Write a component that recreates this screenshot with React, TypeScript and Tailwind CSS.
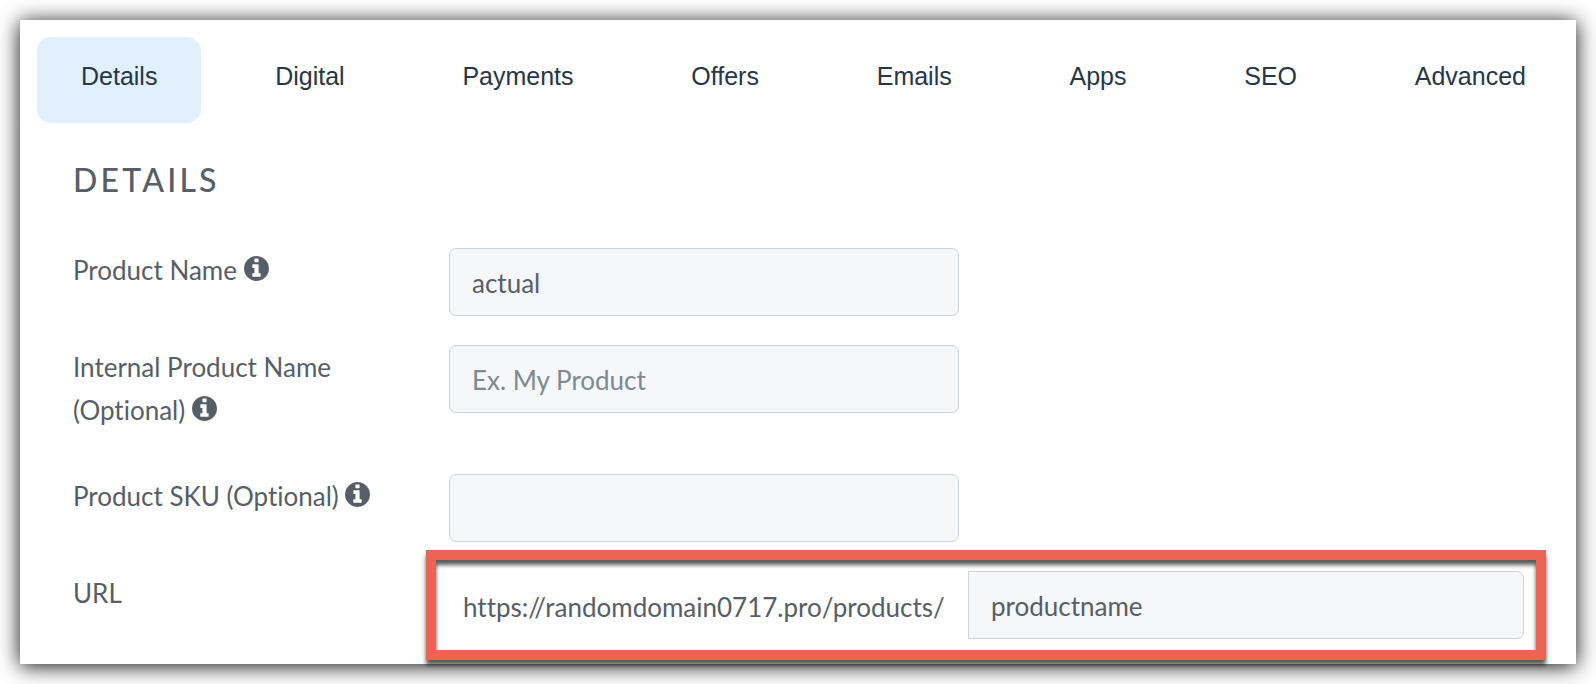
import React from 'react';

const tabs = ['Details', 'Digital', 'Payments', 'Offers', 'Emails', 'Apps', 'SEO', 'Advanced'];

const inputClass =
    'h-[68px] border border-[#cbd3db] bg-[#f5f7f9] px-[22px] pt-0.5 text-[26px] text-[#565e67] placeholder:text-[#7d8993] placeholder:opacity-100 outline-none';

const InfoIcon: React.FC = () => (
    <svg viewBox="128 128 1536 1536" className="inline-block size-[25px] -mt-2.5 align-middle" fill="currentColor" aria-hidden="true">
        <path d="M1152 1376v-160q0-14-9-23t-23-9h-96v-512q0-14-9-23t-23-9h-320q-14 0-23 9t-9 23v160q0 14 9 23t23 9h96v320h-96q-14 0-23 9t-9 23v160q0 14 9 23t23 9h448q14 0 23-9t9-23zM1024 480v-160q0-14-9-23t-23-9h-192q-14 0-23 9t-9 23v160q0 14 9 23t23 9h192q14 0 23-9t9-23zM1664 896q0 209-103 385.5t-279.5 279.5-385.5 103-385.5-103-279.5-279.5-103-385.5 103-385.5 279.5-279.5 385.5-103 385.5 103 279.5 279.5 103 385.5z" />
    </svg>
);

interface FieldRowProps {
    id: string;
    label: string;
    info?: boolean;
    children: React.ReactNode;
}

const FieldRow: React.FC<FieldRowProps> = ({ id, label, info, children }) => (
    <div className="flex items-start">
        <label htmlFor={id} className="w-[376px] shrink-0 pt-px pr-12 pb-[13px] text-[26px] leading-[43px]">
            {label} {info && <InfoIcon />}
        </label>
        {children}
    </div>
);

const App: React.FC = () => (
    <div className="bg-white p-5 font-['Lato',sans-serif] text-[#565e67] [font-variant-ligatures:none]">
        <main className="bg-white pb-[25px] shadow-[0_2px_20px_rgba(0,0,0,0.95)]">
            <nav className="flex justify-between border-b border-[#fcfcfc] pt-[17px] pr-[6px] pl-[17px] font-['Liberation_Sans',Arial,sans-serif] text-[25px] text-[#263646]">
                {tabs.map((tab, index) => (
                    <a
                        key={tab}
                        href="#"
                        className={`h-[86px] rounded-[14px] px-11 pt-5 leading-[38px] ${index === 0 ? 'bg-[#e2f0fe]' : ''}`}
                    >
                        {tab}
                    </a>
                ))}
            </nav>

            <section className="pr-[52px] pl-[53px]">
                <h2 className="pt-8 pb-11 text-[32px] leading-[48px] font-medium tracking-widest">DETAILS</h2>

                <form className="flex flex-col gap-[29px]">
                    <FieldRow id="name" label="Product Name" info>
                        <input id="name" type="text" defaultValue="actual" className={`${inputClass} w-[510px] rounded-[7px]`} />
                    </FieldRow>
                    <FieldRow id="internal-name" label="Internal Product Name (Optional)" info>
                        <input id="internal-name" type="text" placeholder="Ex. My Product" className={`${inputClass} w-[510px] rounded-[7px]`} />
                    </FieldRow>
                    <FieldRow id="sku" label="Product SKU (Optional)" info>
                        <input id="sku" type="text" className={`${inputClass} w-[510px] rounded-[7px]`} />
                    </FieldRow>
                    <FieldRow id="url" label="URL">
                        <div className="relative flex flex-1 items-center">
                            <span className="w-[519px] shrink-0 pt-1 pl-[14px] text-[26px]">https://randomdomain0717.pro/products/</span>
                            <input id="url" type="text" defaultValue="productname" className={`${inputClass} min-w-0 flex-1 rounded-r-[7px]`} />
                            {/* Highlight around the whole url field */}
                            <div className="pointer-events-none absolute -inset-y-[21px] -right-[22px] -left-[23px] border-10 border-[#ec6453] drop-shadow-[0_5px_2px_rgba(0,0,0,0.65)]" />
                        </div>
                    </FieldRow>
                </form>
            </section>
        </main>
    </div>
);

export default App;
